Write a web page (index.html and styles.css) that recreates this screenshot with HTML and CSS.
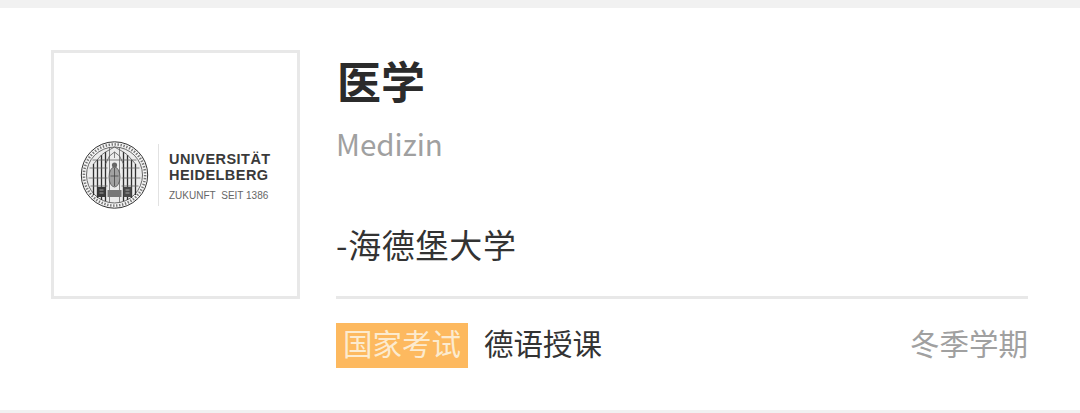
FILE: index.html
```html
<!DOCTYPE html>
<html lang="zh-CN">
<head>
    <meta charset="UTF-8">
    <title>医学</title>
    <link rel="stylesheet" href="styles.css">
</head>
<body>
    <div class="top_band"></div>
    <div class="course_card">
        <div class="logo_box">
            <svg class="seal" width="69" height="70" viewBox="0 0 68 70">
                <circle cx="34" cy="35" r="33.2" fill="#f6f6f6" stroke="#333" stroke-width="1"/>
                <circle cx="34" cy="35" r="30.6" fill="none" stroke="#777" stroke-width="2.6" stroke-dasharray="1.4 1.6"/>
                <circle cx="34" cy="35" r="28" fill="#ececec" stroke="#444" stroke-width="0.8"/>
                <path d="M13 55V24M17 58V20M21 60V15M25 61V12M43 61V12M47 60V15M51 58V20M55 55V24" stroke="#2f2f2f" stroke-width="1.3" fill="none"/>
                <path d="M29 62V8M39 62V8M34 12V18" stroke="#777" stroke-width="0.9" fill="none"/>
                <path d="M9 28H27M41 28H59M8 38H27M41 38H60M10 46H27M41 46H58M12 20H56" stroke="#666" stroke-width="0.8" fill="none"/>
                <path d="M13 24L21 15L25 12L34 7L43 12L47 15L55 24M25 24L29 16L34 12L39 16L43 24" stroke="#555" stroke-width="0.8" fill="none"/>
                <ellipse cx="34" cy="37" rx="5.5" ry="10" fill="#a2a2a2" stroke="#444" stroke-width="0.7"/>
                <circle cx="34" cy="25" r="2.6" fill="#666"/>
                <path d="M34 28V46M30 36H38" stroke="#444" stroke-width="0.8" fill="none"/>
                <rect x="17" y="47" width="8" height="10" fill="#3a3a3a"/>
                <rect x="43" y="47" width="8" height="10" fill="#4a4a4a"/>
                <rect x="27" y="50" width="14" height="7" fill="#777"/>
                <path d="M19 50H23M19 53H23M45 50H49M45 53H49" stroke="#bbb" stroke-width="0.8" fill="none"/>
            </svg>
            <div class="logo_rule"></div>
            <div class="logo_text">
                <div class="logo_name">UNIVERSITÄT</div>
                <div class="logo_name">HEIDELBERG</div>
                <div class="logo_motto">ZUKUNFT&nbsp; SEIT 1386</div>
            </div>
        </div>
        <div class="course_info">
            <h1 class="course_title">医学</h1>
            <div class="course_german">Medizin</div>
            <div class="course_school">-海德堡大学</div>
            <div class="course_footer">
                <span class="tag_exam">国家考试</span>
                <span class="course_lang">德语授课</span>
                <span class="course_term">冬季学期</span>
            </div>
        </div>
    </div>
    <div class="bottom_band"></div>
</body>
</html>
```

FILE: styles.css
```css
html, body {
    margin: 0;
    padding: 0;
}

body {
    height: 413px;
    overflow: hidden;
    background-color: #fff;
    display: flex;
    flex-direction: column;
    font-family: "Noto Sans CJK SC", sans-serif;
}

.top_band {
    height: 8px;
    background-color: #f1f1f1;
}

.bottom_band {
    height: 3px;
    background-color: #f1f1f1;
}

.course_card {
    flex: 1;
    display: flex;
    align-items: flex-start;
    gap: 36px;
    padding: 42px 52px 0 51px;
}

.logo_box {
    box-sizing: border-box;
    width: 249px;
    height: 249px;
    border: 3px solid #e8e8e8;
    display: flex;
    align-items: center;
    padding-left: 26px;
}

.seal {
    flex-shrink: 0;
    filter: blur(0.35px);
}

.logo_rule {
    width: 1px;
    height: 62px;
    margin: 0 10px 0 9px;
    background-color: #e2e2e2;
}

.logo_text {
    color: #3a3a3a;
    white-space: nowrap;
    padding-top: 4px;
}

.logo_name {
    font-family: "Liberation Sans", sans-serif;
    font-size: 14.5px;
    font-weight: bold;
    line-height: 16px;
    letter-spacing: 0.45px;
}

.logo_motto {
    font-family: "Liberation Sans", sans-serif;
    font-size: 10px;
    line-height: 14px;
    margin-top: 6px;
    color: #666;
}

.course_info {
    flex: 1;
}

.course_title {
    margin: 0 0 0 1px;
    font-size: 44px;
    font-weight: bold;
    line-height: 60px;
    color: #2b2b2b;
}

.course_german {
    margin-top: 12px;
    font-size: 29.5px;
    line-height: 42px;
    color: #a0a0a0;
}

.course_school {
    margin-top: 57px;
    font-size: 33px;
    line-height: 46px;
    letter-spacing: 0.7px;
    color: #333;
}

.course_footer {
    margin-top: 29px;
    padding-top: 24px;
    border-top: 3px solid #e8e8e8;
    display: flex;
    align-items: flex-start;
    font-size: 29.5px;
    line-height: 38px;
}

.tag_exam {
    box-sizing: border-box;
    width: 132px;
    height: 45px;
    text-align: center;
    background-color: #fdb95f;
    color: #fcebcf;
}

.course_lang {
    margin-left: 16px;
    color: #333;
}

.course_term {
    margin-left: auto;
    color: #a0a0a0;
}
```
